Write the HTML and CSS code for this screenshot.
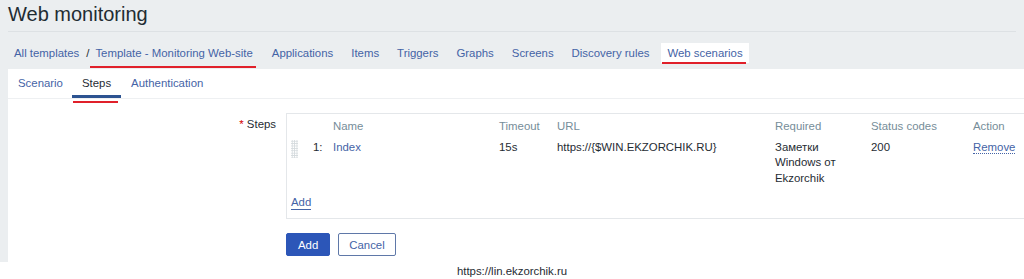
FILE: index.html
```html
<!DOCTYPE html>
<html lang="en">
<head>
  <meta charset="UTF-8" />
  <title>Web monitoring</title>
  <link rel="stylesheet" href="styles.css">
</head>
<body>
  <header class="page-header">
    <h1>Web monitoring</h1>
  </header>

  <!-- Breadcrumbs / host navigation -->
  <nav class="host-nav">
    <a href="#">All templates</a>
    <span class="sep">/</span>
    <a href="#" class="marked">Template - Monitoring Web-site</a>
    <a href="#">Applications</a>
    <a href="#">Items</a>
    <a href="#">Triggers</a>
    <a href="#">Graphs</a>
    <a href="#">Screens</a>
    <a href="#">Discovery rules</a>
    <a href="#" class="current marked">Web scenarios</a>
  </nav>

  <main class="panel">
    <div class="tabs">
      <a href="#">Scenario</a>
      <a href="#" class="active">Steps</a>
      <a href="#">Authentication</a>
    </div>

    <form class="form">
      <div class="form-row">
        <label class="form-label"><span class="req">*</span> Steps</label>
        <div class="steps-box">
          <div class="steps-grid">
            <div></div>
            <div></div>
            <div class="th">Name</div>
            <div class="th">Timeout</div>
            <div class="th">URL</div>
            <div class="th">Required</div>
            <div class="th">Status codes</div>
            <div class="th">Action</div>

            <div class="drag"></div>
            <div>1:</div>
            <div><a href="#" class="link">Index</a></div>
            <div>15s</div>
            <div>https://{$WIN.EKZORCHIK.RU}</div>
            <div class="required">Заметки Windows от Ekzorchik</div>
            <div>200</div>
            <div><a href="#" class="link dotted">Remove</a></div>
          </div>
          <a href="#" class="link add-link">Add</a>
        </div>
      </div>

      <div class="buttons">
        <button type="submit" class="btn primary">Add</button>
        <button type="button" class="btn">Cancel</button>
      </div>
    </form>
  </main>

  <footer class="footer">https://lin.ekzorchik.ru</footer>
</body>
</html>
```

FILE: styles.css
```css
body {
  margin: 0;
  background-color: #ebeef0;
  font-family: "Liberation Sans", Arial, sans-serif;
  font-size: 11.4px;
  color: #1f2c33;
}

a {
  text-decoration: none;
  color: #4463a6;
}

.page-header {
  margin: 0 8px;
  height: 31px;
  border-bottom: 1px solid #dde1e4;
}

h1 {
  margin: 0;
  padding-top: 2px;
  font-size: 20px;
  font-weight: normal;
  line-height: 24px;
}

.host-nav {
  display: flex;
  align-items: center;
  height: 20px;
  margin: 11px 0 0 8px;
  padding-bottom: 6px;
}

.host-nav a {
  position: relative;
  padding: 3px 6px;
  margin-right: 6px;
  line-height: 14px;
}

.host-nav .sep {
  margin: 0 0 0 -5px;
  color: #1f2c33;
}

.host-nav .marked:not(.current) {
  margin-right: 7px;
}

.host-nav .current {
  background-color: #fff;
}

.marked::after {
  content: "";
  position: absolute;
  left: 1px;
  right: 3px;
  bottom: -5px;
  height: 2px;
  background-color: #e0202a;
}

.host-nav .current.marked::after {
  bottom: -1px;
}

.panel {
  margin-left: 8px;
  background-color: #fff;
  height: 193px;
}

.tabs {
  display: flex;
  height: 29px;
  border-bottom: 1px solid #eef0f2;
  padding-left: 6px;
}

.tabs a {
  position: relative;
  padding: 7px 4px 0;
  margin-right: 5px;
  line-height: 14px;
}

.tabs .active {
  color: #1f2c33;
  padding: 7px 10px 0;
  margin: 0 6px 0 0;
  border-bottom: 3px solid #2c5391;
}

.tabs .active::after {
  content: "";
  position: absolute;
  left: 1px;
  right: 3px;
  bottom: -8px;
  height: 2px;
  background-color: #e0202a;
}

.form {
  padding-top: 14px;
}

.form-row {
  display: flex;
  align-items: flex-start;
}

.form-label {
  width: 268px;
  text-align: right;
  padding: 4px 10px 0 0;
  line-height: 14px;
}

.req {
  color: #d40000;
}

.steps-box {
  flex: 1;
  border: 1px solid #e4e7ea;
  border-right: none;
  height: 99px;
  padding: 5px 0 0 4px;
}

.steps-grid {
  display: grid;
  grid-template-columns: 22px 20px 166px 58px 218px 96px 102px auto;
  row-gap: 5px;
  line-height: 15.5px;
}

.th {
  color: #768d99;
}

.drag {
  width: 7px;
  height: 18px;
  background-image: radial-gradient(circle, #d4dadd 0.8px, transparent 1px);
  background-size: 2.4px 2.4px;
}

.required {
  padding-right: 10px;
}

.dotted {
  border-bottom: 1px dotted #4463a6;
}

.add-link {
  display: inline-block;
  margin-top: 9px;
  border-bottom: 1px solid #4463a6;
  line-height: 14px;
}

.buttons {
  display: flex;
  gap: 8px;
  margin: 14px 0 0 278px;
}

.btn {
  font-family: inherit;
  font-size: 11.4px;
  height: 23px;
  padding: 0 10px;
  background-color: #fff;
  color: #4463a6;
  border: 1px solid #5f78a8;
  border-radius: 2px;
}

.btn.primary {
  background-color: #2c56b8;
  color: #fff;
  border-color: #2c56b8;
  padding: 0 11px;
}

.footer {
  background-color: #fff;
  text-align: center;
  height: 16px;
  line-height: 16px;
  padding-top: 1px;
}
```
